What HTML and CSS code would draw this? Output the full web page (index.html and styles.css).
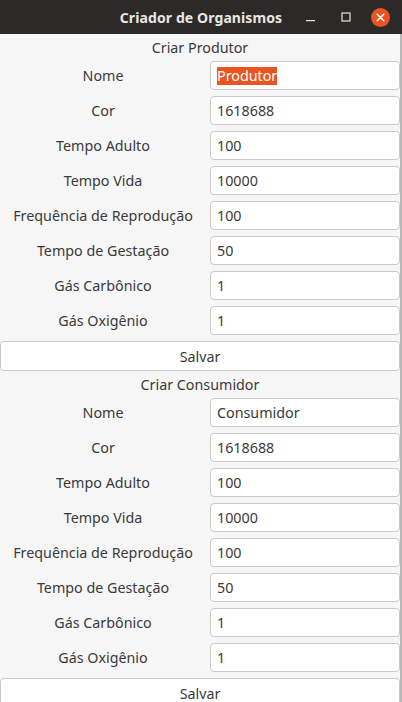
FILE: index.html
```html
<!DOCTYPE html>
<html lang="pt">
<head>
<meta charset="utf-8">
<title>Criador de Organismos</title>
<link rel="stylesheet" href="styles.css">
</head>
<body>
<div class="window">
  <header class="titlebar">
    <div class="tb-spacer"></div>
    <div class="tb-title">Criador de Organismos</div>
    <div class="tb-controls">
      <span class="ctl ctl-min"><svg width="10" height="10" viewBox="0 0 10 10"><rect x="0" y="6" width="9" height="1.2" fill="#e8e6e3"/></svg></span>
      <span class="ctl ctl-max"><svg width="10" height="10" viewBox="0 0 10 10"><rect x="1" y="1" width="8" height="8" fill="none" stroke="#e8e6e3" stroke-width="1.2"/></svg></span>
      <span class="ctl ctl-close"><svg width="19" height="19" viewBox="0 0 19 19"><circle cx="9.5" cy="9.5" r="9.5" fill="#e95420"/><path d="M6.2 6.2 L12.8 12.8 M12.8 6.2 L6.2 12.8" stroke="#ffffff" stroke-width="1.5" stroke-linecap="round"/></svg></span>
    </div>
  </header>
  <main class="content">
    <section class="form">
      <div class="form-title">Criar Produtor</div>
      <div class="row"><label class="lbl">Nome</label><div class="field"><span class="sel">Produtor</span></div></div>
      <div class="row"><label class="lbl">Cor</label><div class="field">1618688</div></div>
      <div class="row"><label class="lbl">Tempo Adulto</label><div class="field">100</div></div>
      <div class="row"><label class="lbl">Tempo Vida</label><div class="field">10000</div></div>
      <div class="row"><label class="lbl">Frequência de Reprodução</label><div class="field">100</div></div>
      <div class="row"><label class="lbl">Tempo de Gestação</label><div class="field">50</div></div>
      <div class="row"><label class="lbl">Gás Carbônico</label><div class="field">1</div></div>
      <div class="row"><label class="lbl">Gás Oxigênio</label><div class="field">1</div></div>
      <button class="btn">Salvar</button>
    </section>
    <section class="form">
      <div class="form-title">Criar Consumidor</div>
      <div class="row"><label class="lbl">Nome</label><div class="field">Consumidor</div></div>
      <div class="row"><label class="lbl">Cor</label><div class="field">1618688</div></div>
      <div class="row"><label class="lbl">Tempo Adulto</label><div class="field">100</div></div>
      <div class="row"><label class="lbl">Tempo Vida</label><div class="field">10000</div></div>
      <div class="row"><label class="lbl">Frequência de Reprodução</label><div class="field">100</div></div>
      <div class="row"><label class="lbl">Tempo de Gestação</label><div class="field">50</div></div>
      <div class="row"><label class="lbl">Gás Carbônico</label><div class="field">1</div></div>
      <div class="row"><label class="lbl">Gás Oxigênio</label><div class="field">1</div></div>
      <button class="btn">Salvar</button>
    </section>
  </main>
</div>
</body>
</html>
```
FILE: styles.css
```css
html, body {
  margin: 0;
  padding: 0;
  background: #f6f6f6;
}
body {
  font-family: "Noto Sans", "Open Sans", "DejaVu Sans", sans-serif;
  font-size: 14.3px;
  color: #3a3a3a;
  overflow: hidden;
}
.window {
  width: 402px;
  height: 702px;
  display: flex;
  flex-direction: column;
  overflow: hidden;
}
.titlebar {
  height: 34px;
  flex: none;
  background: #2c2a29;
  display: grid;
  grid-template-columns: 1fr auto 1fr;
  align-items: center;
}
.tb-title {
  color: #e8e6e3;
  font-weight: bold;
  font-size: 14px;
  letter-spacing: 0.1px;
}
.tb-controls {
  display: flex;
  justify-content: flex-end;
  align-items: center;
  padding-right: 12px;
}
.ctl {
  display: flex;
  align-items: center;
  justify-content: center;
}
.ctl-min { margin-right: 25px; margin-top: 3px; }
.ctl-max { margin-right: 20px; }
.content {
  flex: 1;
  background: #f6f6f6;
  border-right: 2px solid #b9b9b9;
  width: 400px;
  display: flex;
  flex-direction: column;
}
.form {
  display: flex;
  flex-direction: column;
  gap: 6px;
}
.form-title {
  height: 27px;
  line-height: 27px;
  text-align: center;
  margin-bottom: -6px;
}
.row {
  display: grid;
  grid-template-columns: 206px 1fr;
  column-gap: 4px;
  height: 29px;
  align-items: center;
}
.lbl {
  text-align: center;
  white-space: nowrap;
}
.field {
  height: 29px;
  box-sizing: border-box;
  background: #ffffff;
  border: 1px solid #cdc9c5;
  border-radius: 4px;
  padding: 0 6px;
  display: flex;
  align-items: center;
  white-space: nowrap;
}
.sel {
  background: #e95420;
  color: #ffffff;
  line-height: 18px;
}
.btn {
  height: 30px;
  width: 400px;
  margin: 0;
  box-sizing: border-box;
  background: #ffffff;
  border: 1px solid #cdc9c5;
  border-radius: 4px;
  font: inherit;
  color: #3a3a3a;
  padding: 0;
}
```
